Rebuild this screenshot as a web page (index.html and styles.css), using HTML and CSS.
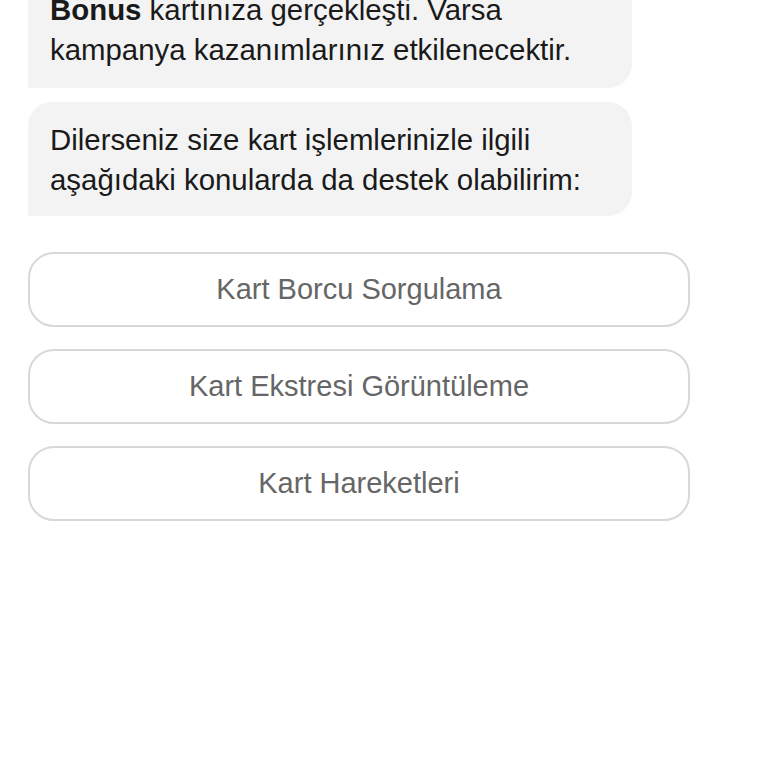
FILE: index.html
```html
<!DOCTYPE html>
<html lang="tr">
<head>
    <meta charset="UTF-8">
    <meta name="viewport" content="width=device-width, initial-scale=1.0">
    <title>Kart İşlemleri</title>
    <link rel="stylesheet" href="styles.css">
</head>
<body>
    <div class="chat">
        <div class="bubble">
            <strong>Bonus</strong> kartınıza gerçekleşti. Varsa<br>
            kampanya kazanımlarınız etkilenecektir.
        </div>
        <div class="bubble">
            Dilerseniz size kart işlemlerinizle ilgili<br>
            aşağıdaki konularda da destek olabilirim:
        </div>
        <div class="options">
            <button class="option">Kart Borcu Sorgulama</button>
            <button class="option">Kart Ekstresi Görüntüleme</button>
            <button class="option">Kart Hareketleri</button>
        </div>
    </div>
</body>
</html>
```

FILE: styles.css
```css
body {
    margin: 0;
    background-color: #fff;
    font-family: "Liberation Sans", Arial, sans-serif;
    overflow: hidden;
}
.chat {
    margin-top: -30px;
    padding: 0 78px 0 28px;
    display: flex;
    flex-direction: column;
}
.bubble {
    width: 604px;
    box-sizing: border-box;
    padding: 20px 22px 18px 22px;
    margin-bottom: 14px;
    background-color: #f3f3f3;
    border-radius: 24px 24px 24px 0;
    color: #1a1a1a;
    font-size: 29.4px;
    line-height: 40px;
}
.bubble + .bubble {
    padding-top: 18px;
    padding-bottom: 16px;
}
.options {
    margin-top: 22px;
    display: flex;
    flex-direction: column;
    gap: 22px;
}
.option {
    height: 75px;
    background-color: #fff;
    border: 2px solid #d8d8d8;
    border-radius: 26px;
    color: #666;
    font-family: inherit;
    font-size: 29px;
    cursor: pointer;
}
```
